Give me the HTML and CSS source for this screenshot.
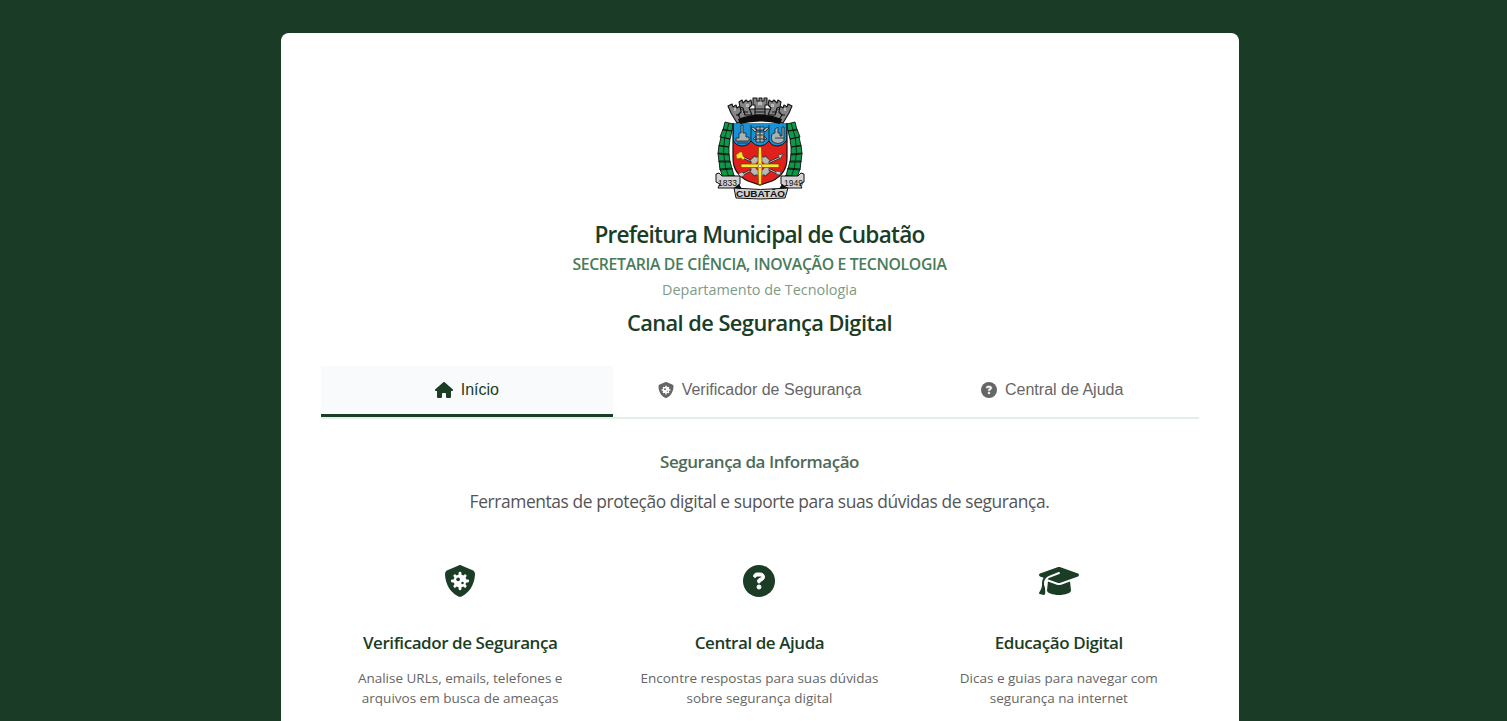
FILE: index.html
```html
<!DOCTYPE html>
<html lang="pt-BR">
<head>
<meta charset="utf-8">
<title>Canal de Segurança Digital</title>
<link rel="stylesheet" href="styles.css">
</head>
<body>
<svg width="0" height="0" class="sprites" aria-hidden="true">
  <symbol id="house" viewBox="0 0 576 512"><path d="M575.8 255.5c0 18-15 32.1-32 32.1l-32 0 .7 160.2c0 2.7-.2 5.4-.5 8.1l0 16.2c0 22.1-17.9 40-40 40l-16 0c-1.1 0-2.2 0-3.3-.1c-1.4 .1-2.8 .1-4.2 .1L416 512l-24 0c-22.1 0-40-17.9-40-40l0-24 0-64c0-17.7-14.3-32-32-32l-64 0c-17.7 0-32 14.3-32 32l0 64 0 24c0 22.1-17.9 40-40 40l-24 0-31.9 0c-1.5 0-3-.1-4.5-.2c-1.2 .1-2.4 .2-3.6 .2l-16 0c-22.1 0-40-17.9-40-40l0-112c0-.9 0-1.9 .1-2.8l0-69.7-32 0c-18 0-32-14-32-32.1c0-9 3-17 10-24L266.4 8c7-7 15-8 22-8s15 2 21 7L564.8 231.5c8 7 12 15 11 24z"/></symbol>
  <symbol id="shield" viewBox="0 0 512 512">
    <path d="M256 0c4.6 0 9.2 1 13.4 2.9L457.7 82.8c22 9.3 38.4 31 38.3 57.2c-.5 99.2-41.3 280.7-213.6 363.2c-16.7 8-36.1 8-52.8 0C57.3 420.7 16.5 239.2 16 140c-.1-26.2 16.3-47.9 38.3-57.2L242.7 2.9C246.8 1 251.4 0 256 0z"/>
    <g stroke="#fff" stroke-width="46" stroke-linecap="round"><path d="M256 132V380M132 256H380M174 174L338 338M338 174L174 338"/></g>
    <circle cx="256" cy="256" r="104" fill="#fff"/><circle cx="226" cy="228" r="30"/><circle cx="296" cy="288" r="20"/>
  </symbol>
  <symbol id="question" viewBox="0 0 512 512"><circle cx="256" cy="256" r="256"/><path fill="#fff" stroke="#fff" stroke-width="16" d="M169.8 165.3c7.9-22.3 29.1-37.3 52.8-37.3l58.3 0c34.9 0 63.1 28.3 63.1 63.1c0 22.6-12.1 43.5-31.7 54.8L280 264.4c-.2 13-10.9 23.6-24 23.6c-13.3 0-24-10.7-24-24l0-13.5c0-8.6 4.6-16.5 12.1-20.8l44.3-25.4c4.7-2.7 7.6-7.7 7.6-13.1c0-8.4-6.8-15.1-15.1-15.1l-58.3 0c-3.4 0-6.4 2.1-7.5 5.3l-.4 1.2c-4.4 12.5-18.2 19-30.7 14.6s-19-18.2-14.6-30.7l.4-1.2zM224 352a32 32 0 1 1 64 0 32 32 0 1 1 -64 0z"/></symbol>
  <symbol id="cap" viewBox="0 0 640 512"><path d="M320 32c-8.1 0-16.1 1.4-23.7 4.1L15.8 137.4C6.3 140.9 0 149.9 0 160s6.3 19.1 15.8 22.6l57.9 20.9C57.3 229.3 48 259.8 48 291.9l0 28.1c0 28.4-10.8 57.7-22.3 80.8c-6.5 13-13.9 25.8-22.5 37.6C0 442.7-.9 448.3 .9 453.4s6 8.9 11.2 10.2l64 16c4.2 1.1 8.7 .3 12.4-2s6.3-6.1 7.1-10.4c8.6-42.8 4.3-81.2-2.1-108.7C90.3 344.3 86 329.8 80 316.5l0-24.6c0-30.2 10.2-58.7 27.9-81.5c12.9-15.5 29.6-28 49.2-35.7l157-61.7c8.2-3.2 17.5 .8 20.7 9s-.8 17.5-9 20.7l-157 61.7c-12.4 4.9-23.3 12.4-32.2 21.6l159.6 57.6c7.6 2.7 15.6 4.1 23.7 4.1s16.1-1.4 23.7-4.1L624.2 182.6c9.5-3.4 15.8-12.5 15.8-22.6s-6.3-19.1-15.8-22.6L343.7 36.1C336.1 33.4 328.1 32 320 32zM128 408c0 35.3 86 72 192 72s192-36.7 192-72L496.7 262.6 354.5 314c-11.1 4-22.8 6-34.5 6s-23.5-2-34.5-6L143.3 262.6 128 408z"/></symbol>
</svg>
<main class="panel">
  <header class="header">
    <svg class="crest" viewBox="0 0 110 115" role="img" aria-label="Brasão de Cubatão">
      <defs><clipPath id="field"><path d="M28 33H82V68Q82 84 67 91L55 95L43 91Q28 84 28 68Z"/></clipPath></defs>
      <!-- laurel branches -->
      <g fill="#0d9a48" stroke="#111" stroke-width=".9" stroke-linejoin="round">
        <path d="M20 32L28 34L27 41L18 40ZM18 39L27 41L25 49L15 47ZM16 47L25 49L24 57L14 56ZM14 55L24 57L24 65L13 64ZM13 63L24 64L25 72L14 72ZM14 71L25 71L27 79L15 80ZM15 79L27 78L29 86L18 88ZM18 87L29 85L33 92L23 95Z"/>
        <path d="M90 32L82 34L83 41L92 40ZM92 39L83 41L85 49L95 47ZM94 47L85 49L86 57L96 56ZM96 55L86 57L86 65L97 64ZM97 63L86 64L85 72L96 72ZM96 71L85 71L83 79L95 80ZM95 79L83 78L81 86L92 88ZM92 87L81 85L77 92L87 95Z"/>
      </g>
      <path d="M24 33Q12 62 26 93M86 33Q98 62 84 93" fill="none" stroke="#111" stroke-width=".8"/>
      <!-- shield -->
      <g clip-path="url(#field)">
        <path fill="#e0201b" d="M28 33H82V98H28Z"/>
        <path fill="#1593d6" stroke="#111" d="M28 32H82V50Q78 56 73 56Q66 56 64 51Q60 56 55 56Q50 56 46 51Q43 56 37 56Q31 56 28 50Z"/>
        <path fill="none" stroke="#111" stroke-width=".8" d="M46 35V51M64 35V51"/>
        <g fill="#a9b1b6" stroke="#222" stroke-width=".8">
          <path d="M31 51V48H34V43H36V35H38V43H41V47H44V51Z"/>
          <path d="M67 51Q65 43 70 43V39L73 37V43H75V46H77V37H79V51Q73 56 67 51Z"/>
          <path d="M51 42H59V52H51ZM51 37H59V40H51ZM48 37L52 40L50 42L46 38ZM62 37L58 40L60 42L64 38ZM48 49L51 46V50ZM62 49L59 46V50Z"/>
          <path fill="none" d="M51 45H59M51 49H59M55 37V52M32 53H43M70 48H79"/>
        </g>
      </g>
      <path d="M28 33V68Q28 84 43 91L55 95L67 91Q82 84 82 68V33" fill="none" stroke="#111" stroke-width="1.2"/>
      <!-- gear, tools and cross -->
      <path d="M35 66L74 84M76 67L36 85" stroke="#222" stroke-width="2.2"/><path d="M35 66L74 84M76 67L36 85" stroke="#bbb" stroke-width="1"/>
      <g transform="translate(0 10)">
        <path d="M47 58L63 74M63 58L47 74" stroke="#333" stroke-width="7.5"/>
        <circle cx="55" cy="66" r="9.5" fill="#b9b9b9" stroke="#444" stroke-width=".8"/>
        <path d="M47.5 58.5L62.5 73.5M62.5 58.5L47.5 73.5" stroke="#b9b9b9" stroke-width="6"/>
        <circle cx="55" cy="66" r="5" fill="#c51f1b"/>
        <path d="M53.5 47H56.5L57 64H74V67.5H57L56.5 84.5H53.5L53 67.5H36V64H53Z" fill="#ffe52b" stroke="#69400a" stroke-width=".7"/>
        <circle cx="55" cy="66" r="1.8" fill="#fff" stroke="#a75"/>
      </g>
      <path d="M31 65L35 62L37 62L38 66L40 68L38 70L36 68L32 69Z" fill="#f6e72b" stroke="#7b4a0a" stroke-width=".5"/>
      <path d="M73 65L78 64L75 69ZM33 84L37 82L40 85L36 87ZM71 81L76 82L75 85L71 84Z" fill="#ccc" stroke="#333" stroke-width=".6"/>
      <!-- mural crown -->
      <g fill="#858585" stroke="#111" stroke-width="1.1" stroke-linejoin="round">
        <path d="M34 32L29 19H82L76 32Q55 29 34 32Z"/>
        <path d="M23 16L27 14L28 17L31 15L32 18L35 16L36 22L33 25L37 31L32 33L26 23ZM87 16L83 14L82 17L79 15L78 18L75 16L74 22L77 25L73 31L78 33L84 23Z"/>
        <path d="M34 12L37 10L38 13L41 10L43 12L46 10L47 15L44 18L47 25H40L38 18L35 17ZM76 12L73 10L72 13L69 10L67 12L64 10L63 15L66 18L63 25H70L72 18L75 17Z"/>
        <path d="M48 8H52V11H54V8H57V11H59V8H62V15H60V25H50V15H48Z"/>
        <path d="M31 25H35M38 22H43M50 19H60M50 22H60M67 22H72M76 25H80"/>
      </g>
      <path d="M33 29Q55 20 77 29L75 34Q55 29 35 34Z" fill="#0b0b0b"/>
      <g fill="#bbb"><path d="M53 12H57V15H53ZM41 14H44V17H41ZM66 14H69V17H66ZM29 18H31V21H29ZM79 18H81V21H79Z"/></g>
      <!-- ribbon -->
      <g fill="#d2d2d2" stroke="#111" stroke-width="1">
        <path d="M11 84L14 83L17 86L35 86V94L30 98L13 98L15 94L11 92ZM99 84L96 83L93 86L76 86V94L81 98L97 98L95 94L99 92Z"/>
        <path d="M29 98Q55 101 83 98L80 108Q55 110 31 108Z"/>
      </g>
      <path d="M29 98L37 99L34 94ZM83 98L74 99L77 94Z" fill="#111"/>
      <g class="ribbon-text"><text x="13" y="96" class="year" textLength="19" lengthAdjust="spacingAndGlyphs">1833</text><text x="79" y="96" class="year" textLength="19" lengthAdjust="spacingAndGlyphs">1949</text><text x="31" y="107" class="city" textLength="49" lengthAdjust="spacingAndGlyphs">CUBATÃO</text></g>
    </svg>
    <h1 class="org">Prefeitura Municipal de Cubatão</h1>
    <p class="secretariat">SECRETARIA DE CIÊNCIA, INOVAÇÃO E TECNOLOGIA</p>
    <p class="department">Departamento de Tecnologia</p>
    <h2 class="channel">Canal de Segurança Digital</h2>
  </header>
  <nav class="tabs">
    <button class="tab tab-active"><svg class="tab-icon tab-house"><use href="#house"/></svg>Início</button>
    <button class="tab"><svg class="tab-icon"><use href="#shield"/></svg>Verificador de Segurança</button>
    <button class="tab"><svg class="tab-icon"><use href="#question"/></svg>Central de Ajuda</button>
  </nav>
  <section class="intro">
    <h3 class="intro-title">Segurança da Informação</h3>
    <p class="intro-text">Ferramentas de proteção digital e suporte para suas dúvidas de segurança.</p>
  </section>
  <section class="features">
    <article class="feature"><svg class="feature-icon"><use href="#shield"/></svg><h4 class="feature-title">Verificador de Segurança</h4><p class="feature-text">Analise URLs, emails, telefones e<br>arquivos em busca de ameaças</p></article>
    <article class="feature"><svg class="feature-icon"><use href="#question"/></svg><h4 class="feature-title">Central de Ajuda</h4><p class="feature-text">Encontre respostas para suas dúvidas<br>sobre segurança digital</p></article>
    <article class="feature"><svg class="feature-icon"><use href="#cap"/></svg><h4 class="feature-title">Educação Digital</h4><p class="feature-text">Dicas e guias para navegar com<br>segurança na internet</p></article>
  </section>
</main>
</body>
</html>
```
FILE: styles.css
```css
* { box-sizing: border-box; margin: 0; padding: 0; }
html { background: #1a3c26; height: 100%; }
body { height: 721px; padding: 33px 0 0 280.5px; background: #1a3c26; font-family: "Segoe UI", "Open Sans", "Noto Sans", sans-serif; }
.sprites { position: absolute; }
.panel { width: 958px; height: 688px; padding: 57px 40px 0; background: #fff; border-radius: 8px 8px 0 0; }
.header { display: flex; flex-direction: column; align-items: center; height: 276px; text-align: center; white-space: nowrap; }
.crest { width: 110px; height: 115px; flex: none; }
.ribbon-text { font-family: "Liberation Sans", Arial, sans-serif; fill: #111; }
.year { font-size: 9.5px; }
.city { font-size: 9px; font-weight: 700; }
.org { margin-top: 13px; font-size: 22.6px; line-height: 34px; font-weight: 600; color: #1b3d26; letter-spacing: -.75px; }
.secretariat { font-size: 15.8px; line-height: 24px; font-weight: 600; color: #4a7c59; letter-spacing: -.35px; }
.department { margin-top: 2px; font-size: 14.4px; line-height: 24px; color: #7d9b86; }
.channel { margin-top: 4px; font-size: 21.8px; line-height: 34px; font-weight: 600; color: #1b3d26; letter-spacing: -.55px; }
.tabs { display: flex; height: 53px; border-bottom: 2px solid #e1efe6; }
.tab { flex: 1; display: flex; align-items: center; justify-content: center; gap: 8px; height: 51px; border: 0; border-bottom: 3px solid transparent; background: transparent; color: #666; fill: #666; font: 16px "Liberation Sans", Arial, sans-serif; }
.tab-active { background: #f8fafc; border-bottom-color: #1b3d26; color: #1b3d26; fill: #1b3d26; }
.tab-icon { width: 16px; height: 16px; }
.tab-house { width: 18px; }
.intro { padding-top: 31px; text-align: center; }
.intro-title { font-size: 17px; line-height: 24px; font-weight: 600; color: #4d6b59; letter-spacing: -.46px; }
.intro-text { margin-top: 14px; font-size: 17.4px; line-height: 26px; color: #555; letter-spacing: -.4px; }
.features { display: grid; grid-template-columns: repeat(3, 1fr); gap: 20px; margin-top: 51px; text-align: center; }
.feature { display: flex; flex-direction: column; align-items: center; }
.feature-icon { width: 40px; height: 32px; fill: #1b3d26; }
.feature-title { margin-top: 33px; font-size: 17px; line-height: 26px; font-weight: 600; color: #1b3d26; letter-spacing: -.43px; }
.feature-text { margin-top: 12px; font-size: 13.5px; line-height: 20px; color: #666; white-space: nowrap; }
```
